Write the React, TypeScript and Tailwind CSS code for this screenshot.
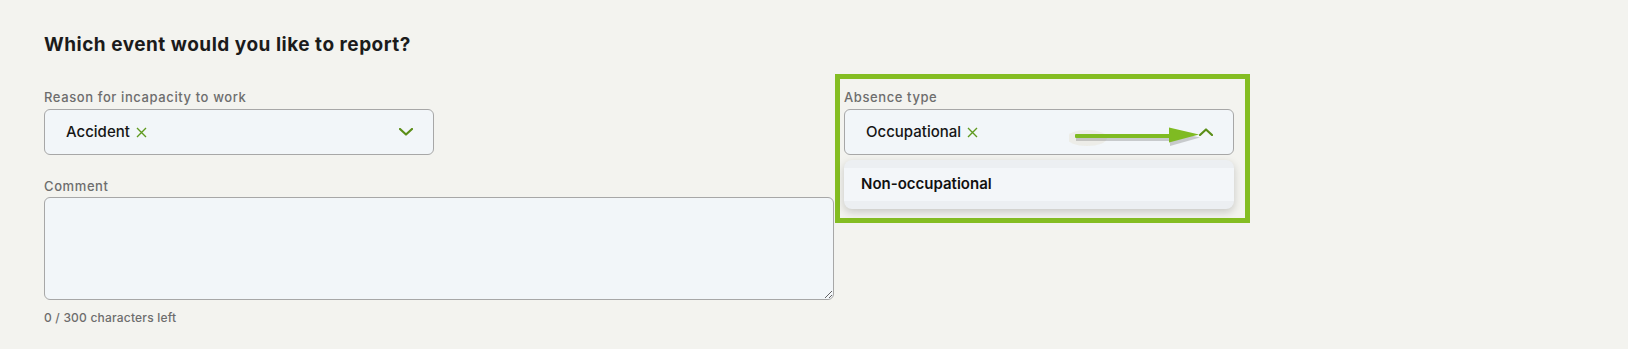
import React from "react";

const Chevron = ({ up }: { up?: boolean }) => (
  <svg width="14" height="8" viewBox="0 0 14 8" fill="none" className="shrink-0">
    <path
      d={up ? "M1 7L7 1.5L13 7" : "M1 1L7 6.5L13 1"}
      stroke="#5b8e17"
      strokeWidth="2.2"
      strokeLinecap="round"
      strokeLinejoin="round"
    />
  </svg>
);

const Clear = () => (
  <svg width="11" height="11" viewBox="0 0 11 11" className="ml-[6px] mt-[1px]">
    <path d="M1 1L10 10M10 1L1 10" stroke="#5f9a1f" strokeWidth="1.4" />
  </svg>
);

const Select = ({ value, open }: { value: string; open?: boolean }) => (
  <div className="flex h-[46px] items-center justify-between rounded-[6px] border border-[#a7a7a7] bg-[#f2f6f9] pl-[21px] pr-[20px]">
    <div className="flex items-center text-[15px] font-medium text-[#151515]">
      {value}
      <Clear />
    </div>
    <Chevron up={open} />
  </div>
);

const Label = ({ children }: { children: React.ReactNode }) => (
  <p className="mb-[3px] text-[13px] font-medium leading-[18px] tracking-[0.6px] text-[#6d6d6d]">{children}</p>
);

const Arrow = () => (
  <svg width="140" height="30" viewBox="0 0 140 30" className="absolute left-[225px] top-[34px]">
    <ellipse cx="18" cy="16" rx="20" ry="8" fill="#ebebe3" opacity="0.8" />
    <g opacity="0.35" transform="translate(1 3)">
      <rect x="6" y="12" width="100" height="4" fill="#7a7a7a" />
      <path d="M100 6L130 12.5L100 21Z" fill="#7a7a7a" />
    </g>
    <rect x="6" y="12" width="100" height="4" rx="1" fill="#7fbb22" />
    <path d="M100 5.5L130 12.5L100 20.5Z" fill="#7fbb22" />
  </svg>
);

export default function App() {
  return (
    <div className="min-h-[349px] bg-[#f3f3ef] pl-[44px] pt-[33px] font-['Inter','Liberation_Sans',sans-serif]">
      <h2 className="text-[19px] font-bold leading-[24px] tracking-[0.5px] text-[#1b1b1b]">
        Which event would you like to report?
      </h2>

      <div className="mt-[31px] grid grid-cols-[390px_390px_390px] gap-x-[10px]">
        <div>
          <Label>Reason for incapacity to work</Label>
          <Select value="Accident" />
        </div>
        <div />
        <div className="relative">
          <Label>Absence type</Label>
          <Select value="Occupational" open />
          <Arrow />
          <div className="absolute left-0 right-0 top-[72px] z-10 rounded-[8px] bg-[#eceff2] py-[8px] shadow-[0_3px_8px_rgba(0,0,0,0.18)]">
            <div className="flex h-[33px] items-center bg-[#f3f6f9] pl-[17px] text-[15px] font-semibold text-[#111]">
              Non-occupational
            </div>
          </div>
          <div className="pointer-events-none absolute left-[-9px] top-[-14px] h-[149px] w-[415px] border-[5px] border-[#84bd22]" />
        </div>

        <div className="col-span-2 mt-[22px]">
          <p className="mb-[2px] text-[13px] font-medium leading-[18px] tracking-[0.6px] text-[#6d6d6d]">Comment</p>
          <textarea className="block h-[103px] w-full rounded-[6px] border border-[#a7a7a7] bg-[#f2f6f9] outline-none" />
          <p className="mt-[10px] text-[12px] font-medium leading-[16px] tracking-[0.2px] text-[#6d6d6d]">
            0 / 300 characters left
          </p>
        </div>
      </div>
    </div>
  );
}
